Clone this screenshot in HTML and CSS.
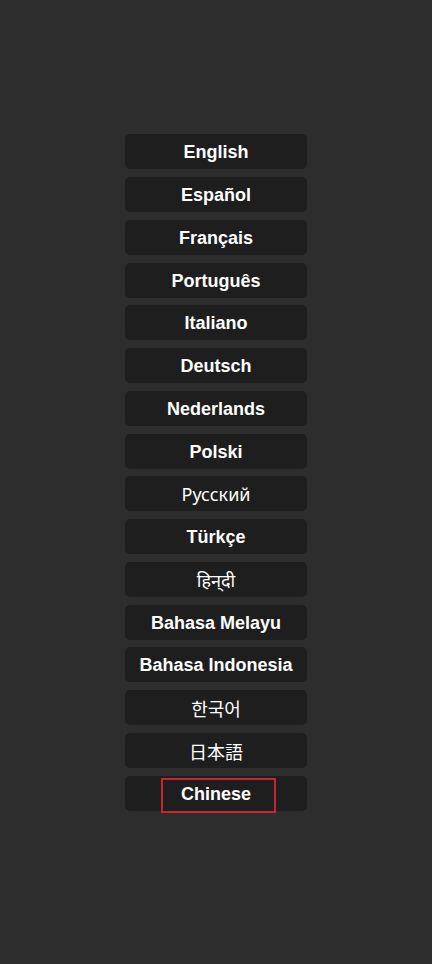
FILE: index.html
```html
<!DOCTYPE html>
<html lang="en">
<head>
<meta charset="utf-8">
<title>Language</title>
<link rel="stylesheet" href="styles.css">
</head>
<body>
<div class="list">
  <button class="lang">English</button>
  <button class="lang">Español</button>
  <button class="lang">Français</button>
  <button class="lang">Português</button>
  <button class="lang">Italiano</button>
  <button class="lang">Deutsch</button>
  <button class="lang">Nederlands</button>
  <button class="lang">Polski</button>
  <button class="lang regular">Русский</button>
  <button class="lang">Türkçe</button>
  <button class="lang regular">हिन्&zwnj;दी</button>
  <button class="lang">Bahasa Melayu</button>
  <button class="lang">Bahasa Indonesia</button>
  <button class="lang regular cjk" lang="ko">한국어</button>
  <button class="lang regular cjk" lang="ja">日本語</button>
  <button class="lang selected">Chinese<span class="highlight"></span></button>
</div>
</body>
</html>
```
FILE: styles.css
```css
html, body {
  margin: 0;
  padding: 0;
  background: #2d2d2d;
  height: 100%;
}
body {
  font-family: "Liberation Sans", Arial, sans-serif;
}
.list {
  display: flex;
  flex-direction: column;
  align-items: center;
  gap: 7.75px;
  padding-top: 134.3px;
}
.lang {
  position: relative;
  width: 182px;
  height: 35px;
  margin: 0;
  padding: 0;
  border: none;
  border-radius: 5px;
  background: #1e1e1e;
  color: #ffffff;
  font-family: "Liberation Sans", Arial, sans-serif;
  font-size: 18px;
  font-weight: bold;
  line-height: 36px;
  text-align: center;
}
.regular {
  font-weight: normal;
  font-family: "Noto Sans", "Liberation Sans", sans-serif;
}
.cjk {
  font-family: "Noto Sans CJK KR", "Noto Sans CJK JP", sans-serif;
}
.lang[lang="ja"] {
  font-family: "Noto Sans CJK JP", sans-serif;
}
.highlight {
  position: absolute;
  left: 36px;
  top: 2px;
  width: 115px;
  height: 35px;
  box-sizing: border-box;
  border: 2px solid #c8262d;
}
```
